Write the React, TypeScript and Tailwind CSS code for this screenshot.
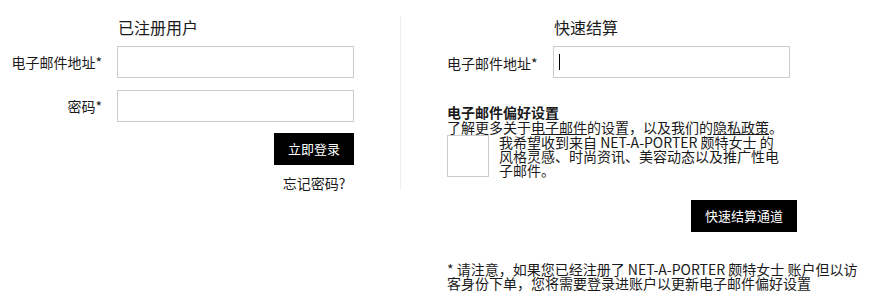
export default function App() {
  return (
    <div
      className="flex h-[305px] w-[875px] bg-white text-[#1a1a1a]"
      style={{ fontFamily: '"Noto Sans CJK SC", "Noto Sans", sans-serif' }}
    >
      {/* registered users */}
      <div className="w-[400px] shrink-0 pt-[15px]">
        <h2 className="pl-[118px] text-[16px] leading-[24px] font-normal">已注册用户</h2>
        <div className="mt-[7px] flex items-center">
          <label className="mr-[15px] w-[102px] text-right text-[14px] leading-[20px]">
            电子邮件地址*
          </label>
          <div className="h-[32px] w-[237px] border border-[#cccccc]" />
        </div>
        <div className="mt-[12px] flex items-center">
          <label className="mr-[15px] w-[102px] text-right text-[14px] leading-[20px]">密码*</label>
          <div className="h-[32px] w-[237px] border border-[#cccccc]" />
        </div>
        <div className="mt-[11px] flex flex-col items-end pr-[46px]">
          <button className="h-[32px] w-[80px] bg-black text-[13px] text-white">立即登录</button>
          <a className="mt-[8px] w-[80px] text-center text-[14px] leading-[20px]">忘记密码?</a>
        </div>
      </div>

      <div className="mt-[16px] h-[174px] w-px bg-[#eeeeee]" />

      {/* quick checkout */}
      <div className="flex-1 pl-[46px] pt-[15px]">
        <h2 className="pl-[107px] text-[16px] leading-[24px] font-normal">快速结算</h2>
        <div className="mt-[7px] flex items-center">
          <label className="mr-[15px] w-[91px] translate-y-[1px] text-[14px] leading-[20px]">
            电子邮件地址*
          </label>
          <div className="flex h-[32px] w-[237px] items-center border border-[#cccccc] pl-[5px]">
            <span className="h-[16px] w-px bg-black" />
          </div>
        </div>

        <div className="mt-[27px] text-[14px] leading-[15px]">
          <p className="font-bold">电子邮件偏好设置</p>
          <p>
            了解更多关于<span className="underline">电子邮件</span>的设置，以及我们的
            <span className="underline">隐私政策</span>。
          </p>
        </div>
        <div className="flex items-start">
          <div className="h-[42px] w-[42px] shrink-0 border border-[#cccccc]" />
          <p className="ml-[10px] w-[290px] text-[14px] leading-[14px]">
            我希望收到来自 NET-A-PORTER 颇特女士 的
            <br />
            风格灵感、时尚资讯、美容动态以及推广性电子邮件。
          </p>
        </div>

        <button className="ml-[244px] mt-[23px] h-[32px] w-[106px] bg-black text-[13px] text-white">
          快速结算通道
        </button>

        <p className="mt-[30px] w-[420px] text-[14px] leading-[14px]">
          * 请注意，如果您已经注册了 NET-A-PORTER 颇特女士 账户但以访客身份下单，您将需要登录进账户以更新电子邮件偏好设置
        </p>
      </div>
    </div>
  );
}
